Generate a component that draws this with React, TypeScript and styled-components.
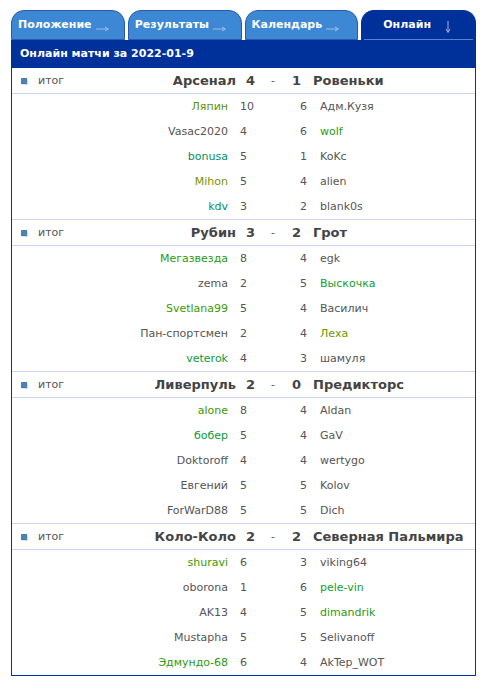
import React from "react";
import styled, { createGlobalStyle } from "styled-components";

const Global = createGlobalStyle`
  html, body { margin: 0; padding: 0; background: #ffffff; }
  body { font-family: "DejaVu Sans", Verdana, sans-serif; font-size: 11px; color: #555; }
`;

const Page = styled.div`
  padding: 10px 0 0 11px;
  width: 465px;
`;

const Tabs = styled.div`
  display: flex;
  gap: 3px;
  height: 30px;
`;

const Tab = styled.div<{ $active?: boolean; $w: number }>`
  width: ${(p) => p.$w}px;
  box-sizing: border-box;
  height: 30px;
  border: 1px solid ${(p) => (p.$active ? "#00309a" : "#2a5aa8")};
  border-bottom: ${(p) => (p.$active ? "none" : "1px solid #2a5aa8")};
  border-radius: 13px 13px 0 0;
  background: ${(p) => (p.$active ? "#00309a" : "#3c88d4")};
  display: flex;
  flex-direction: column;
  padding: 0 ${(p) => (p.$active ? "2px" : "0")};
`;

const TabLabel = styled.div<{ $active?: boolean }>`
  flex: 1;
  display: flex;
  align-items: center;
  gap: 4px;
  padding-left: ${(p) => (p.$active ? "19px" : "6px")};
  padding-bottom: 2px;
  color: #ffffff;
  font-weight: bold;
  font-size: 11px;
  border-bottom: ${(p) => (p.$active ? "1px solid #5a80cc" : "none")};
`;

const RightArrow = () => (
  <svg width="14" height="8" viewBox="0 0 14 8" style={{ marginTop: 7 }}>
    <line x1="0" y1="5" x2="12" y2="5" stroke="#9dbbe6" strokeWidth="1" />
    <path d="M9 3 L12.5 5 L9 7" fill="none" stroke="#9dbbe6" strokeWidth="1" />
  </svg>
);

const DownArrow = () => (
  <svg width="8" height="12" viewBox="0 0 8 12" style={{ marginLeft: 9, marginTop: 6 }}>
    <line x1="4" y1="0" x2="4" y2="11" stroke="#9fb4df" strokeWidth="1" />
    <path d="M2 8 L4 11.5 L6 8" fill="none" stroke="#9fb4df" strokeWidth="1" />
  </svg>
);

const Panel = styled.div`
  border: 1px solid #0033a0;
  border-top: none;
`;

const PanelHeader = styled.div`
  height: 28px;
  margin: 0 -1px;
  background: #00309a;
  color: #ffffff;
  font-weight: bold;
  font-size: 11px;
  line-height: 27px;
  padding-left: 9px;
`;

const Group = styled.div`
  border-bottom: 1px solid #c9d5ef;
  &:last-child { border-bottom: none; }
`;

const MatchRow = styled.div`
  display: grid;
  grid-template-columns: 224px 26px 22px 17px 1fr;
  height: 25px;
  align-items: center;
  border-bottom: 1px solid #c9d5ef;
  color: #444;
  font-weight: bold;
  font-size: 13px;
`;

const LabelCell = styled.div`
  display: flex;
  align-items: center;
  padding-left: 9px;
`;

const Bullet = styled.span`
  width: 6px;
  height: 6px;
  background: #4d80b6;
  box-shadow: 1px 1px 0 #d6dbe2;
  margin-right: 11px;
`;

const Itog = styled.span`
  font-weight: normal;
  font-size: 11px;
  color: #555;
`;

const TeamLeft = styled.span`
  margin-left: auto;
`;

const HScore1 = styled.div`
  padding-left: 10px;
`;

const Dash = styled.div`
  text-align: center;
  font-weight: normal;
  font-size: 11px;
  color: #555;
`;

const HScore2 = styled.div`
  text-align: right;
`;

const TeamRight = styled.div`
  padding-left: 12px;
  white-space: nowrap;
`;

const PlayerRow = styled.div`
  display: grid;
  grid-template-columns: 216px 50px 42px 1fr;
  height: 25px;
  align-items: center;
  font-size: 11px;
  color: #555;
`;

const Name = styled.div<{ $c?: string; $right?: boolean }>`
  color: ${(p) => p.$c || "#555"};
  text-align: ${(p) => (p.$right ? "right" : "left")};
  white-space: nowrap;
`;

const PScore1 = styled.div`
  padding-left: 12px;
`;

const PScore2 = styled.div`
  text-align: right;
  padding-right: 13px;
`;

type P = [string, string | undefined, number, number, string, string | undefined];

const G = "#2a9a10";
const OL = "#7e9000";
const TE = "#00906a";

const groups: { t1: string; s1: number; s2: number; t2: string; rows: P[] }[] = [
  {
    t1: "Арсенал", s1: 4, s2: 1, t2: "Ровеньки",
    rows: [
      ["Ляпин", "#5f9400", 10, 6, "Адм.Кузя", undefined],
      ["Vasac2020", undefined, 4, 6, "wolf", G],
      ["bonusa", TE, 5, 1, "KoKc", undefined],
      ["Mihon", OL, 5, 4, "alien", undefined],
      ["kdv", TE, 3, 2, "blank0s", undefined],
    ],
  },
  {
    t1: "Рубин", s1: 3, s2: 2, t2: "Грот",
    rows: [
      ["Мегазвезда", G, 8, 4, "egk", undefined],
      ["zema", undefined, 2, 5, "Выскочка", "#12a030"],
      ["Svetlana99", "#3c9a00", 5, 4, "Василич", undefined],
      ["Пан-спортсмен", undefined, 2, 4, "Леха", "#6e9600"],
      ["veterok", "#0a9a40", 4, 3, "шамуля", undefined],
    ],
  },
  {
    t1: "Ливерпуль", s1: 2, s2: 0, t2: "Предикторс",
    rows: [
      ["alone", "#3c9a00", 8, 4, "Aldan", undefined],
      ["бобер", "#0a9a3a", 5, 4, "GaV", undefined],
      ["Doktoroff", undefined, 4, 4, "wertygo", undefined],
      ["Евгений", undefined, 5, 5, "Kolov", undefined],
      ["ForWarD88", undefined, 5, 5, "Dich", undefined],
    ],
  },
  {
    t1: "Коло-Коло", s1: 2, s2: 2, t2: "Северная Пальмира",
    rows: [
      ["shuravi", "#3c9a00", 6, 3, "viking64", undefined],
      ["oborona", undefined, 1, 6, "pele-vin", "#12a030"],
      ["AK13", undefined, 4, 5, "dimandrik", G],
      ["Mustapha", undefined, 5, 5, "Selivanoff", undefined],
      ["Эдмундо-68", G, 6, 4, "AkTep_WOT", undefined],
    ],
  },
];

const tabs = [
  { label: "Положение", w: 114 },
  { label: "Результаты", w: 114 },
  { label: "Календарь", w: 114 },
];

export default function App() {
  return (
    <>
      <Global />
      <Page>
        <Tabs>
          {tabs.map((t) => (
            <Tab key={t.label} $w={t.w}>
              <TabLabel>
                {t.label}
                <RightArrow />
              </TabLabel>
            </Tab>
          ))}
          <Tab $active $w={115}>
            <TabLabel $active>
              Онлайн
              <DownArrow />
            </TabLabel>
          </Tab>
        </Tabs>
        <Panel>
          <PanelHeader>Онлайн матчи за 2022-01-9</PanelHeader>
          {groups.map((g) => (
            <Group key={g.t1}>
              <MatchRow>
                <LabelCell>
                  <Bullet />
                  <Itog>итог</Itog>
                  <TeamLeft>{g.t1}</TeamLeft>
                </LabelCell>
                <HScore1>{g.s1}</HScore1>
                <Dash>-</Dash>
                <HScore2>{g.s2}</HScore2>
                <TeamRight>{g.t2}</TeamRight>
              </MatchRow>
              {g.rows.map((r) => (
                <PlayerRow key={r[0]}>
                  <Name $right $c={r[1]}>{r[0]}</Name>
                  <PScore1>{r[2]}</PScore1>
                  <PScore2>{r[3]}</PScore2>
                  <Name $c={r[5]}>{r[4]}</Name>
                </PlayerRow>
              ))}
            </Group>
          ))}
        </Panel>
      </Page>
    </>
  );
}
